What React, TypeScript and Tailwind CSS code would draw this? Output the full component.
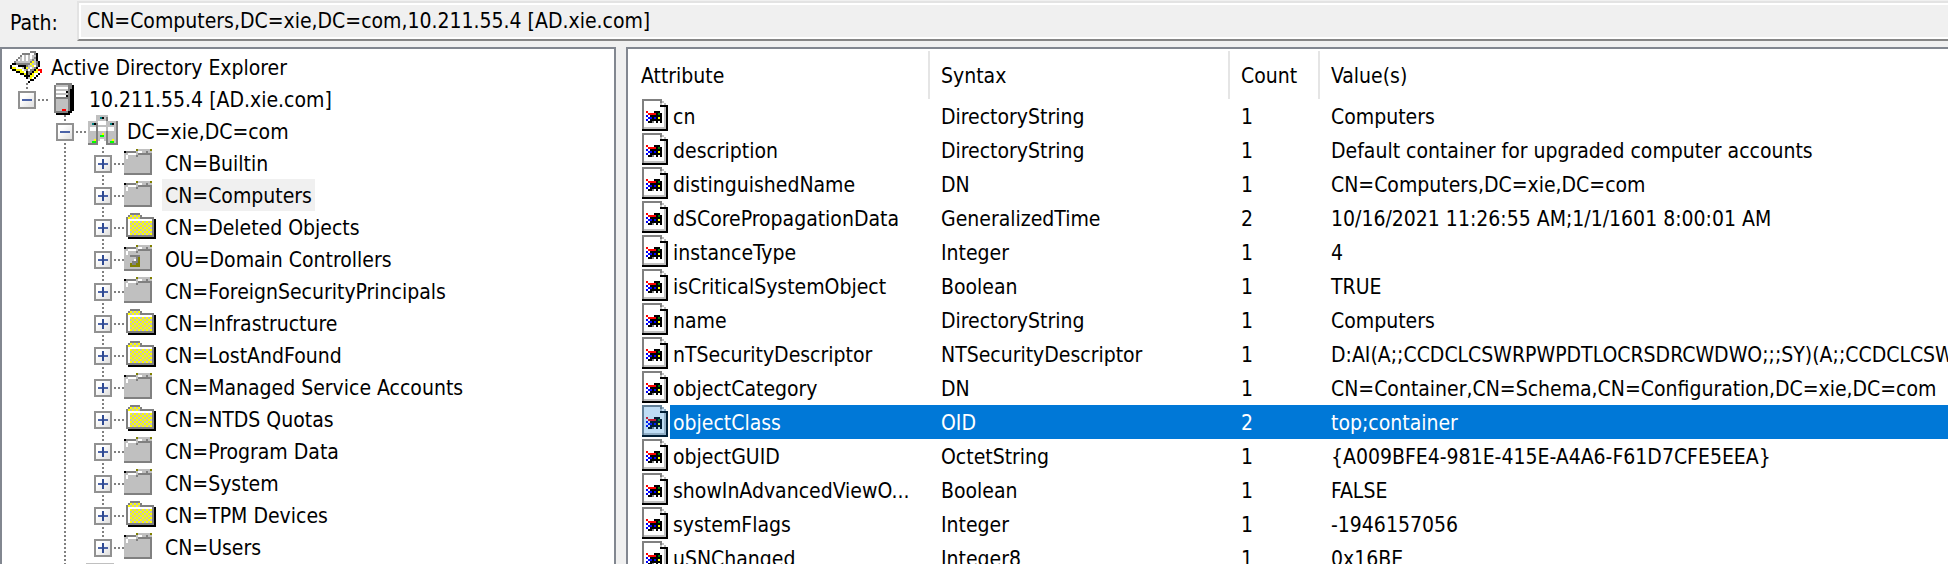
type Palette = Record<string, string>;

const palette: Palette = {
  K: '#000000', D: '#808080', L: '#c0c0c0', W: '#ffffff', O: '#808000',
  Y: '#ffff00', R: '#ff0000', G: '#00ff00', T: '#008080', B: '#0000ff', N: '#008000',
};

const selectedPalette: Palette = {
  K: '#001e36', D: '#607e96', L: '#90aec6', W: '#bfddf5', O: '#607e36',
  Y: '#bfdd36', R: '#bf1e36', G: '#00dd36', T: '#007e96', B: '#001ef5', N: '#007e36',
};

const body = (row: string, count: number) => Array.from({ length: count }, () => row);

const rootIcon = [
  '..........DDD...',
  '......DDDDWWDK..',
  '.....DWLWLWLLK..',
  '....DLWLWLWLDK..',
  '...DWLWLWLLDLK..',
  '..DLLLLLLLDYLDK.',
  '.KKDDDDDDDYLLDK.',
  'KWWWKKKKDLLYWDK.',
  'KYYWWWLKYLWLDK..',
  '.KKYYYWLDWDDKYRR',
  '...KKYYWKDDKYYWR',
  '.....KKYKDKYWWK.',
  '.......KKKYYWK..',
  '........KLYWK...',
  '.........WKK....',
  '.........K......',
];

const serverIcon = [
  '....DDDDDDDD....',
  '...DLLLLLLDDK...',
  '...DWWWWWWDDK...',
  '...DLLLLLLDKK...',
  '...DWWWWWKDKK...',
  '...DLLLLLLDKK...',
  '...DWWWWWKDKK...',
  '...DDDDDDDDKK...',
  ...body('...DLLLLLLDKK...', 5),
  '...DLLLRRLDKK...',
  '...DDDDDDDKK....',
  '....KKKKKKK.....',
];

const domainIcon = [
  '.....LLLLLL.....',
  '.....LLTKLD.....',
  '.....LLLLLD.....',
  '.LLLLLWWWWLLLLLD',
  '.LLTKDWWWWLLTKLD',
  '.LLLLDLLLLLLLLLD',
  '.LWWWDWWWWLWWWLD',
  '.LWWWDWWWWLWWWLD',
  '.LLLLDLLLLDLLLLD',
  '.LLLLDLLYLDLLLLD',
  '.LLLLDLGGLDLLLLD',
  '.LLLLDLLLLDLLLLD',
  '.LLLYDL..LDLLYLD',
  '.LLGGD....DLGGLD',
  '.DDDDD....DDDDDD',
];

const containerIcon = [
  '................',
  '......OLLLLLLO..',
  'KDDDDDLWWLLDLL..',
  'LLWWWWLDDDDDDD..',
  'LWLLLLDLLLLLLD..',
  'LWLLLLLLLLLLLD..',
  ...body('LLLLLLLLLLLLLD..', 7),
  'DDDDDDDDDDDDDD..',
];

const unitIcon = [
  ...containerIcon.slice(0, 6),
  'LLLDDDDDLLLLLD..',
  'LLLLLLDOLLLLLD..',
  'LLLLLWDOLLLLLD..',
  'LLLLDDDOLLLLLD..',
  'LLLODDOOLLLLLD..',
  'LLLOOOOOLLLLLD..',
  'LLLLLLLLLLLLLD..',
  'DDDDDDDDDDDDDD..',
];

const folderIcon = [
  '................',
  '...DDDDD........',
  '..DYLYLYD.......',
  '.DYLYLYLDDDDDDD.',
  '.DWWWWWWWWWWWWDK',
  '.DWYLYLYLYLYLYDK',
  '.DWLYLYLYLYLYLDK',
  '.DWYLYLYLYLYLYDK',
  '.DWLYLYLYLYLYLDK',
  '.DWYLYLYLYLYLYDK',
  '.DWLYLYLYLYLYLDK',
  '.DWYLYLYLYLYLYDK',
  '.DDDDDDDDDDDDDDK',
  '..KKKKKKKKKKKKKK',
];

const partitionIcon = [
  'LLLLLLLLLLLLLL..',
  ...body('LLLLLLLLLLLLLD..', 13),
  'DDDDDDDDDDDDDD..',
];

const attributeIcon = [
  '..DDDDDDDDDD....',
  '..DWWWWWWWWDL...',
  '..DWWWWWWWWLWL..',
  '..DWWWWWWWWKKKK.',
  '..DWWWWWWWWWWLK.',
  '..DWWWWWWWWWWLK.',
  '..DWRWWWKKKWWLK.',
  '..DWWRRRRKNKWLK.',
  '..DWBWKKKKKKWLK.',
  '..DWWBBKBKYKWLK.',
  '..DWBWKKKKKKWLK.',
  '..DWWKKDWKWKWLK.',
  '..DWWWWWWWWWWLK.',
  '..DWWWWWWWWWWLK.',
  '..DLLLLLLLLLLLK.',
  '..KKKKKKKKKKKKK.',
];

function PixelIcon({ grid, colors = palette }: { grid: string[]; colors?: Palette }) {
  return (
    <svg viewBox="0 0 16 16" className="size-8 shrink-0" shapeRendering="crispEdges" aria-hidden="true">
      {grid.flatMap((row, y) =>
        [...row].map((c, x) =>
          c === '.' ? null : <rect key={`${x}-${y}`} x={x} y={y} width="1" height="1" fill={colors[c]} />,
        ),
      )}
    </svg>
  );
}

type Rail = 'none' | 'line';

function RailCell({ kind }: { kind: Rail }) {
  return (
    <svg viewBox="0 0 38 32" className="h-8 w-[38px] shrink-0" shapeRendering="crispEdges" aria-hidden="true">
      {kind === 'line' && <path d="M17 0V32" stroke="#808080" strokeWidth="2" strokeDasharray="2 2" />}
    </svg>
  );
}

function Expander({ open, last, label }: { open: boolean; last: boolean; label: string }) {
  return (
    <button type="button" aria-expanded={open} aria-label={label} className="h-8 w-[38px] shrink-0">
      <svg viewBox="0 0 38 32" className="h-8 w-[38px]" shapeRendering="crispEdges">
        <defs>
          <linearGradient id="box" x1="0" y1="0" x2="1" y2="1">
            <stop offset="0.3" stopColor="#ffffff" />
            <stop offset="1" stopColor="#dcdcdc" />
          </linearGradient>
        </defs>
        <path d="M17 0V8" stroke="#808080" strokeWidth="2" strokeDasharray="2 2" />
        {!last && <path d="M17 28V32" stroke="#808080" strokeWidth="2" strokeDasharray="2 2" />}
        <path d="M28 17H38" stroke="#808080" strokeWidth="2" strokeDasharray="2 2" />
        <rect x="9" y="9" width="16" height="16" fill="url(#box)" stroke="#919191" strokeWidth="2" />
        <path d="M12 17H22" stroke="#4b63a7" strokeWidth="2" />
        {!open && <path d="M17 12V22" stroke="#2f4a92" strokeWidth="2" />}
      </svg>
    </button>
  );
}

type Node = { name: string; icon: string[]; rails: Rail[]; open?: boolean; last?: boolean; selected?: boolean; root?: boolean };

const child = (name: string, icon: string[], extra: Partial<Node> = {}): Node => ({
  name, icon, rails: ['none', 'line'], ...extra,
});

const nodes: Node[] = [
  { name: 'Active Directory Explorer', icon: rootIcon, rails: [], root: true },
  { name: '10.211.55.4 [AD.xie.com]', icon: serverIcon, rails: [], open: true, last: true },
  { name: 'DC=xie,DC=com', icon: domainIcon, rails: ['none'], open: true },
  child('CN=Builtin', containerIcon),
  child('CN=Computers', containerIcon, { selected: true }),
  child('CN=Deleted Objects', folderIcon),
  child('OU=Domain Controllers', unitIcon),
  child('CN=ForeignSecurityPrincipals', containerIcon),
  child('CN=Infrastructure', folderIcon),
  child('CN=LostAndFound', folderIcon),
  child('CN=Managed Service Accounts', containerIcon),
  child('CN=NTDS Quotas', folderIcon),
  child('CN=Program Data', containerIcon),
  child('CN=System', containerIcon),
  child('CN=TPM Devices', folderIcon),
  child('CN=Users', containerIcon, { last: true }),
  { name: '', icon: partitionIcon, rails: ['none'] },
];

const attributes: [string, string, string, string][] = [
  ['cn', 'DirectoryString', '1', 'Computers'],
  ['description', 'DirectoryString', '1', 'Default container for upgraded computer accounts'],
  ['distinguishedName', 'DN', '1', 'CN=Computers,DC=xie,DC=com'],
  ['dSCorePropagationData', 'GeneralizedTime', '2', '10/16/2021 11:26:55 AM;1/1/1601 8:00:01 AM'],
  ['instanceType', 'Integer', '1', '4'],
  ['isCriticalSystemObject', 'Boolean', '1', 'TRUE'],
  ['name', 'DirectoryString', '1', 'Computers'],
  ['nTSecurityDescriptor', 'NTSecurityDescriptor', '1', 'D:AI(A;;CCDCLCSWRPWPDTLOCRSDRCWDWO;;;SY)(A;;CCDCLCSW'],
  ['objectCategory', 'DN', '1', 'CN=Container,CN=Schema,CN=Configuration,DC=xie,DC=com'],
  ['objectClass', 'OID', '2', 'top;container'],
  ['objectGUID', 'OctetString', '1', '{A009BFE4-981E-415E-A4A6-F61D7CFE5EEA}'],
  ['showInAdvancedViewO...', 'Boolean', '1', 'FALSE'],
  ['systemFlags', 'Integer', '1', '-1946157056'],
  ['uSNChanged', 'Integer8', '1', '0x16BE'],
];

const selectedAttribute = 'objectClass';

function Tree() {
  return (
    <ul role="tree" aria-label="Directory" className="w-[616px] shrink-0 overflow-hidden border-2 border-b-0 border-[#828790] bg-white pt-[2px] pl-2">
      {nodes.map((n) => (
        <li key={n.name} role="treeitem" aria-selected={!!n.selected} className="flex h-8 items-center">
          {n.rails.map((r, i) => <RailCell key={i} kind={r} />)}
          {!n.root && <Expander open={!!n.open} last={!!n.last} label={`Toggle ${n.name}`} />}
          <PixelIcon grid={n.icon} />
          <span className={`ml-[6px] px-[3px] pt-[2px] leading-[30px] whitespace-nowrap ${n.selected ? 'bg-[#f0f0f0]' : ''}`}>{n.name}</span>
        </li>
      ))}
    </ul>
  );
}

function AttributeTable() {
  return (
    <div className="min-w-0 flex-1 overflow-hidden border-2 border-r-0 border-b-0 border-[#828790] bg-white pt-[2px]">
      <table className="w-full table-fixed border-collapse text-left whitespace-nowrap">
        <colgroup>
          <col className="w-[302px]" />
          <col className="w-[300px]" />
          <col className="w-[90px]" />
          <col />
        </colgroup>
        <thead>
          <tr className="h-12">
            <th className="p-0 font-normal"><div className="flex h-12 items-center border-r-2 border-[#e5e5e5] pt-[2px] pl-[13px]">Attribute</div></th>
            <th className="p-0 font-normal"><div className="flex h-12 items-center border-r-2 border-[#e5e5e5] pt-[2px] pl-[11px]">Syntax</div></th>
            <th className="p-0 font-normal"><div className="flex h-12 items-center border-r-2 border-[#e5e5e5] pt-[2px] pl-[11px]">Count</div></th>
            <th className="p-0 font-normal"><div className="flex h-12 items-center pt-[2px] pl-[11px]">Value(s)</div></th>
          </tr>
        </thead>
        <tbody>
          {attributes.map(([name, syntax, count, value]) => {
            const selected = name === selectedAttribute;
            const fill = selected ? 'bg-[#0078d7] text-white' : '';
            return (
              <tr key={name} aria-selected={selected} className="h-[34px]">
                <td className="p-0">
                  <div className="flex h-[34px] items-start pl-[10px]">
                    <PixelIcon grid={attributeIcon} colors={selected ? selectedPalette : palette} />
                    <span className={`min-w-0 flex-1 overflow-hidden pt-[2px] pl-[3px] ${fill}`}>{name}</span>
                  </div>
                </td>
                <td className={`overflow-hidden p-0 pt-[2px] pl-[11px] ${fill}`}>{syntax}</td>
                <td className={`overflow-hidden p-0 pt-[2px] pl-[11px] ${fill}`}>{count}</td>
                <td className={`overflow-hidden p-0 pt-[2px] pl-[11px] ${fill}`}>{value}</td>
              </tr>
            );
          })}
        </tbody>
      </table>
    </div>
  );
}

export default function App() {
  return (
    <div className="flex h-screen flex-col overflow-hidden bg-[#f0f0f0] font-['DejaVu_Sans_Condensed','Noto_Sans',sans-serif] text-[21px] leading-8 text-black">
      <header className="flex pt-[1px] pb-[6px]">
        <label htmlFor="path" className="w-[77px] shrink-0 pt-[6px] pl-[10px]">Path:</label>
        <div className="flex h-10 min-w-0 flex-1 border-t-2 border-b-2 border-l-2 border-t-[#e3e3e3] border-b-[#868686] border-l-[#e3e3e3]">
          <input
            id="path"
            readOnly
            defaultValue="CN=Computers,DC=xie,DC=com,10.211.55.4 [AD.xie.com]"
            className="min-w-0 flex-1 border-y-2 border-l-2 border-white bg-[#f0f0f0] pl-[6px] outline-none"
          />
        </div>
      </header>
      <main className="flex min-h-0 flex-1 gap-[10px]">
        <Tree />
        <AttributeTable />
      </main>
    </div>
  );
}
